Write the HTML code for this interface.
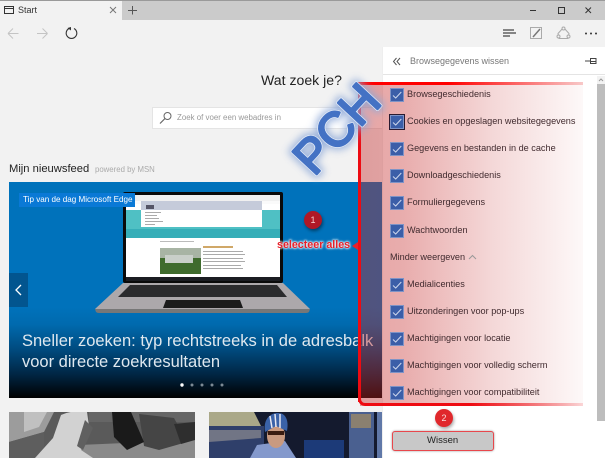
<!DOCTYPE html>
<html><head><meta charset="utf-8">
<style>
html,body{margin:0;padding:0;width:605px;height:458px;overflow:hidden;background:#f2f2f2;font-family:"Liberation Sans",sans-serif}
.a{position:absolute}
.t{position:absolute;white-space:nowrap}
.cb{position:absolute;left:390px;width:12px;height:12px;background:#3b5ea8;border:.5px solid #7e93c6}
.cb svg{position:absolute;left:0;top:0}
.lb{position:absolute;left:407px;font-size:9.150px;color:#402a2e;white-space:nowrap;line-height:12px}
</style></head><body>
<div class="a" style="left:0;top:0;width:605px;height:458px;overflow:hidden">
<!-- tab bar -->
<div class="a" style="left:0;top:0;width:605px;height:20px;background:#cbcbcb"></div>
<div class="a" style="left:0;top:0;width:605px;height:1px;background:#9a9a9a"></div>
<div class="a" style="left:0;top:1px;width:122px;height:19px;background:#f2f2f2"></div>
<svg class="a" style="left:0;top:0" width="605" height="50" fill="none">
<rect x="4.500" y="6.500" width="9" height="7" stroke="#333" stroke-width="1"/><path d="M4 8.500H14" stroke="#333"/>
<path d="M110 7L116 13M116 7L110 13" stroke="#777"/>
<path d="M132.500 6V14.500M128 10.500H137" stroke="#555"/>
<path d="M530 10.500H536" stroke="#333" stroke-width="1"/>
<rect x="558.500" y="7.500" width="6" height="6" stroke="#333"/>
<path d="M585.500 7.500L591 13M591 7.500L585.500 13" stroke="#333"/>
<path d="M8 33.500H18.500M8 33.500L13 28.500M8 33.500L13 38.500" stroke="#c4c4c4"/>
<path d="M37 33.500H47.500M47.500 33.500L42.500 28.500M47.500 33.500L42.500 38.500" stroke="#c4c4c4"/>
<path d="M69 28.500A5.300 5.300 0 1 0 74 28.500" stroke="#333" stroke-width="1.100"/><path d="M67.500 28L71 27V30.500Z" fill="#333"/>
<path d="M503 30H514M503 33H516M503 36H510" stroke="#444" stroke-width="1.200"/>
<path d="M530.500 27.500H541.500V38.500H530.500Z" stroke="#aaa"/><path d="M533 37L540 29" stroke="#777" stroke-width="1.500"/>
<path d="M563.500 27.500L569 33.500L568 38.500H559L558 33.500Z" stroke="#aaa" stroke-linejoin="round"/>
<circle cx="563.500" cy="28.500" r="1.500" fill="#f2f2f2" stroke="#aaa"/><circle cx="558.500" cy="36.500" r="1.500" fill="#f2f2f2" stroke="#aaa"/><circle cx="568.500" cy="36.500" r="1.500" fill="#f2f2f2" stroke="#aaa"/>
<circle cx="586" cy="33.500" r="1" fill="#333"/><circle cx="591" cy="33.500" r="1" fill="#333"/><circle cx="596" cy="33.500" r="1" fill="#333"/>
</svg>
<div class="t" style="left:18px;top:4px;font-size:9px;line-height:12px;color:#333">Start</div>

<!-- search -->
<div class="t" style="left:261px;top:70px;font-size:14.100px;line-height:20px;color:#222">Wat zoek je?</div>
<div class="a" style="left:152px;top:107px;width:240px;height:20px;background:#fff;border:1px solid #e4e4e4"></div>
<svg class="a" style="left:158px;top:111px" width="16" height="14" fill="none"><circle cx="9.500" cy="5" r="3.500" stroke="#666"/><path d="M7 7.500L2 12.500" stroke="#666" stroke-width="1.200"/></svg>
<div class="t" style="left:177px;top:112px;font-size:7.900px;line-height:12px;color:#999">Zoek of voer een webadres in</div>

<!-- news -->
<div class="t" style="left:9px;top:162px;font-size:11.200px;line-height:15px;color:#222">Mijn nieuwsfeed</div>
<div class="t" style="left:95px;top:164px;font-size:7.800px;line-height:12px;color:#aaa">powered by MSN</div>

<!-- hero -->
<div class="a" style="left:9px;top:182px;width:375px;height:216px;background:linear-gradient(180deg,#0072bb 0,#0072bb 58%,#006aae 66%,#00497c 78%,#002644 89%,#000 100%);overflow:hidden"></div>
<div class="a" style="left:9px;top:273px;width:19px;height:34px;background:#02558f"></div>
<svg class="a" style="left:14px;top:284px" width="10" height="12" fill="none"><path d="M7 1L2 6L7 11" stroke="#fff" stroke-width="1.300"/></svg>

<!-- laptop -->
<svg class="a" style="left:0;top:0" width="382" height="330">
<path d="M95 309H310L309 312Q308 313 306 313H99Q97 313 96 312Z" fill="#777"/>
<path d="M123 283H283L310 309H95Z" fill="#aca8ab"/>
<path d="M130 285H277L287 297H118Z" fill="#2b2b2d"/>
<path d="M166 300H240L243 308H163Z" fill="#1b1b1b"/>
<rect x="123" y="192" width="160" height="91" rx="2" fill="#0a0a0a"/>
<rect x="126" y="195" width="154" height="82" fill="#fff"/>
<rect x="126" y="210" width="154" height="19" fill="#4fc0c4"/>
<rect x="126" y="229" width="154" height="9" fill="#36aeb8"/>
<rect x="126" y="195" width="154" height="6" fill="#f0f0f0"/>
<rect x="126" y="201" width="154" height="3" fill="#fafafa"/>
<rect x="141" y="201" width="121" height="26" fill="#fff"/>
<rect x="141" y="201" width="121" height="9" fill="#c5cbda"/>
<rect x="145" y="212" width="16" height="1" fill="#aaa"/><rect x="145" y="215" width="12" height="1" fill="#aaa"/><rect x="145" y="218" width="14" height="1" fill="#aaa"/><rect x="145" y="221" width="18" height="1" fill="#aaa"/><rect x="145" y="224" width="10" height="1" fill="#aaa"/>
<rect x="146" y="205" width="8" height="4" fill="#556"/>
<rect x="160" y="241" width="34" height="1" fill="#bbb"/>
<rect x="160" y="248" width="41" height="26" fill="#3f6b2d"/>
<rect x="160" y="248" width="41" height="10" fill="#a8b4a4"/>
<rect x="165" y="255" width="28" height="8" fill="#c9cfc9"/>
<rect x="203" y="246" width="30" height="2" fill="#d0a868"/>
<rect x="203" y="251" width="40" height="1" fill="#aaa"/><rect x="203" y="254" width="42" height="1" fill="#aaa"/><rect x="203" y="258" width="40" height="1" fill="#aaa"/><rect x="203" y="261" width="42" height="1" fill="#aaa"/><rect x="203" y="265" width="38" height="1" fill="#aaa"/><rect x="203" y="268" width="40" height="1" fill="#aaa"/>
<rect x="126" y="277" width="154" height="4" fill="#1b1d22"/>
</svg>
<div class="a" style="left:19px;top:193px;width:116px;height:14px;background:#0a79d6"></div>
<div class="t" style="left:23px;top:194px;font-size:8.100px;line-height:12px;color:#fff">Tip van de dag Microsoft Edge</div>
<div class="t" style="left:22px;top:331px;font-size:16.500px;line-height:21px;color:#dfe8ef">Sneller zoeken: typ rechtstreeks in de adresbalk<br>voor directe zoekresultaten</div>
<svg class="a" style="left:175px;top:380px" width="60" height="10"><circle cx="7" cy="5" r="1.700" fill="#fff"/><circle cx="17" cy="5" r="1.500" fill="#7c8a94"/><circle cx="27" cy="5" r="1.500" fill="#7c8a94"/><circle cx="37" cy="5" r="1.500" fill="#7c8a94"/><circle cx="47" cy="5" r="1.500" fill="#7c8a94"/></svg>

<!-- bottom images -->
<svg class="a" style="left:9px;top:412px" width="186" height="46">
<rect width="186" height="46" fill="#5a5a5a"/>
<path d="M0 0H45L35 20L0 30Z" fill="#9c9c9c"/>
<path d="M15 0H38L30 15L15 20Z" fill="#c0c0c0"/>
<path d="M0 30L35 20V46H0Z" fill="#5e5e5e"/>
<path d="M70 33L186 28V46H70Z" fill="#8a8a8a"/>
<path d="M80 0H186V10H80Z" fill="#666"/>
<path d="M130 2L165 6L178 30L150 38L135 34Z" fill="#454545"/>
<path d="M165 12L186 10V28L172 32Z" fill="#2e2e2e"/>
<path d="M26 46L44 26L52 3Q62 -2 78 0L80 14L72 38L84 46Z" fill="#d2d2d2"/>
<path d="M76 8L84 16L74 38L68 34Z" fill="#606060"/>
<path d="M103 0H122L135 30L118 38L105 25Z" fill="#1a1a1a"/>
</svg>
<svg class="a" style="left:209px;top:412px" width="173" height="46">
<rect width="173" height="46" fill="#141a2e"/>
<path d="M0 0H45L52 14L0 16Z" fill="#aaa888"/>
<path d="M0 14H55V46H0Z" fill="#2f3f6a"/>
<path d="M0 18H52V26L0 30Z" fill="#717585"/>
<rect x="140" y="0" width="25" height="46" fill="#4a6090"/><rect x="142" y="2" width="20" height="14" fill="#8a8070"/>
<rect x="168" y="0" width="5" height="46" fill="#6078a8"/>
<rect x="95" y="28" width="40" height="18" fill="#1c3a78"/>
<path d="M41 46L48 33L76 29L87 46Z" fill="#8499cc"/>
<ellipse cx="67" cy="24" rx="9" ry="12" fill="#c99a80"/>
<path d="M56 20C54 6 62 1 69 1C77 1 80 9 78 19L67 14Z" fill="#3a62a8"/>
<path d="M66 2L67 15M71 2L71 16M61 4L63 16" stroke="#e8e8f0" stroke-width="1.500"/>
<rect x="59" y="19" width="16" height="4" fill="#3a1c10"/>
</svg>

<!-- panel -->
<div class="a" style="left:382px;top:47px;width:223px;height:411px;background:#fff;border-left:1px solid #eee;box-sizing:border-box"></div>
<div class="a" style="left:383px;top:74px;width:222px;height:1px;background:#e4e4e4"></div>
<svg class="a" style="left:392px;top:56px" width="10" height="11" fill="none"><path d="M4.500 2L1.500 5.500L4.500 9M8 2L5 5.500L8 9" stroke="#555"/></svg>
<div class="t" style="left:410px;top:54px;font-size:9px;line-height:14px;color:#777">Browsegegevens wissen</div>
<svg class="a" style="left:585px;top:55px" width="14" height="12" fill="none"><path d="M0 6H6M6 6.500H11" stroke="#444"/><rect x="5.500" y="3.500" width="5.500" height="5" stroke="#444"/></svg>
<!-- scrollbar -->
<div class="a" style="left:597px;top:76px;width:8px;height:345px;background:#bdbdbd"></div>
<div class="a" style="left:597px;top:76px;width:8px;height:8px;background:#f2f2f2"></div>
<svg class="a" style="left:597px;top:76px" width="8" height="8" fill="none"><path d="M2 5L4 3L6 5" stroke="#999"/></svg>

<!-- overlay -->
<div class="a" style="left:360px;top:82px;width:223px;height:324px;background:linear-gradient(90deg,rgba(196,40,40,.42) 0,rgba(196,40,40,.38) 20%,rgba(196,40,40,.18) 60%,rgba(196,40,40,.03) 100%)"></div>
<div class="a" style="left:358px;top:82px;width:3px;height:320px;background:#ee0b12"></div>
<div class="a" style="left:358px;top:82px;width:225px;height:3px;background:linear-gradient(90deg,#f00,#f00 40%,#f8c8c8 100%)"></div>
<div class="a" style="left:358px;top:396px;width:225px;height:10px;border-left:3px solid #ee0b12;border-bottom:3px solid #ee0b12;border-bottom-left-radius:7px;box-sizing:border-box;-webkit-mask-image:linear-gradient(90deg,#000 50%,rgba(0,0,0,.15) 100%);mask-image:linear-gradient(90deg,#000 50%,rgba(0,0,0,.15) 100%)"></div>

<!-- items -->
<div class="cb" style="top:88px"><svg width="12" height="12" fill="none"><path d="M2 6.500L4.700 9L10.300 3" stroke="#cdd6ec"/></svg></div>
<div class="lb" style="top:88px">Browsegeschiedenis</div>
<div class="cb" style="top:115px;outline:1px solid #2a1a30"><svg width="12" height="12" fill="none"><path d="M2 6.500L4.700 9L10.300 3" stroke="#cdd6ec"/></svg></div>
<div class="lb" style="top:115px">Cookies en opgeslagen websitegegevens</div>
<div class="cb" style="top:142px"><svg width="12" height="12" fill="none"><path d="M2 6.500L4.700 9L10.300 3" stroke="#cdd6ec"/></svg></div>
<div class="lb" style="top:142px">Gegevens en bestanden in de cache</div>
<div class="cb" style="top:169px"><svg width="12" height="12" fill="none"><path d="M2 6.500L4.700 9L10.300 3" stroke="#cdd6ec"/></svg></div>
<div class="lb" style="top:169px">Downloadgeschiedenis</div>
<div class="cb" style="top:196px"><svg width="12" height="12" fill="none"><path d="M2 6.500L4.700 9L10.300 3" stroke="#cdd6ec"/></svg></div>
<div class="lb" style="top:196px">Formuliergegevens</div>
<div class="cb" style="top:224px"><svg width="12" height="12" fill="none"><path d="M2 6.500L4.700 9L10.300 3" stroke="#cdd6ec"/></svg></div>
<div class="lb" style="top:224px">Wachtwoorden</div>
<div class="lb" style="top:251px;left:390px">Minder weergeven</div>
<svg class="a" style="left:468px;top:254px" width="9" height="7" fill="none"><path d="M1 5L4.500 1.500L8 5" stroke="#999"/></svg>
<div class="cb" style="top:278px"><svg width="12" height="12" fill="none"><path d="M2 6.500L4.700 9L10.300 3" stroke="#cdd6ec"/></svg></div>
<div class="lb" style="top:278px">Medialicenties</div>
<div class="cb" style="top:305px"><svg width="12" height="12" fill="none"><path d="M2 6.500L4.700 9L10.300 3" stroke="#cdd6ec"/></svg></div>
<div class="lb" style="top:305px">Uitzonderingen voor pop-ups</div>
<div class="cb" style="top:332px"><svg width="12" height="12" fill="none"><path d="M2 6.500L4.700 9L10.300 3" stroke="#cdd6ec"/></svg></div>
<div class="lb" style="top:332px">Machtigingen voor locatie</div>
<div class="cb" style="top:359px"><svg width="12" height="12" fill="none"><path d="M2 6.500L4.700 9L10.300 3" stroke="#cdd6ec"/></svg></div>
<div class="lb" style="top:359px">Machtigingen voor volledig scherm</div>
<div class="cb" style="top:386px"><svg width="12" height="12" fill="none"><path d="M2 6.500L4.700 9L10.300 3" stroke="#cdd6ec"/></svg></div>
<div class="lb" style="top:386px">Machtigingen voor compatibiliteit</div>

<!-- Wissen -->
<div class="a" style="left:392px;top:431px;width:100px;height:18px;background:#c8c8c8;border:1px solid #e8474c;border-radius:3px;box-shadow:0 0 2px #999"></div>
<div class="t" style="left:427px;top:434px;font-size:9.500px;line-height:13px;color:#222">Wissen</div>

<!-- callouts -->
<div class="a" style="left:304px;top:211px;width:18px;height:18px;border-radius:50%;background:#b01826;box-shadow:1px 2px 3px rgba(0,0,0,.45)"></div>
<div class="t" style="left:304px;top:214px;width:18px;text-align:center;font-size:9px;line-height:12px;color:#f4d0d0">1</div>
<div class="t" style="left:277px;top:239px;font-size:10.700px;font-weight:bold;line-height:13px;color:#e8202a;text-shadow:0 0 2px #fff,0 0 2px #fff,0 0 3px #fff">selecteer alles</div>
<svg class="a" style="left:352px;top:242px" width="7" height="8"><path d="M6 0V8L0 4Z" fill="#e8202a"/></svg>
<div class="a" style="left:435px;top:409px;width:18px;height:18px;border-radius:50%;background:#e0282c;box-shadow:1px 2px 3px rgba(0,0,0,.35)"></div>
<div class="t" style="left:435px;top:412px;width:18px;text-align:center;font-size:9px;line-height:12px;color:#f8dcdc">2</div>

<!-- PCH -->
<svg class="a" style="left:260px;top:60px;overflow:visible" width="140" height="130">
<defs><filter id="gl" x="-30%" y="-30%" width="160%" height="160%"><feGaussianBlur stdDeviation="4"/></filter></defs>
<g transform="translate(54,117) rotate(-47)" font-family="Liberation Sans,sans-serif" font-size="48" stroke-linejoin="round">
<text x="0" y="0" fill="#8ea9d8" stroke="#8ea9d8" stroke-width="8" filter="url(#gl)" opacity=".85">PCH</text>
<text x="0" y="0" fill="#e6edf8" stroke="#e6edf8" stroke-width="3.800">PCH</text>
<text x="0" y="0" fill="#4472c4" stroke="#4472c4" stroke-width="2.400">PCH</text>
</g>
</svg>
</div>
</body></html>
